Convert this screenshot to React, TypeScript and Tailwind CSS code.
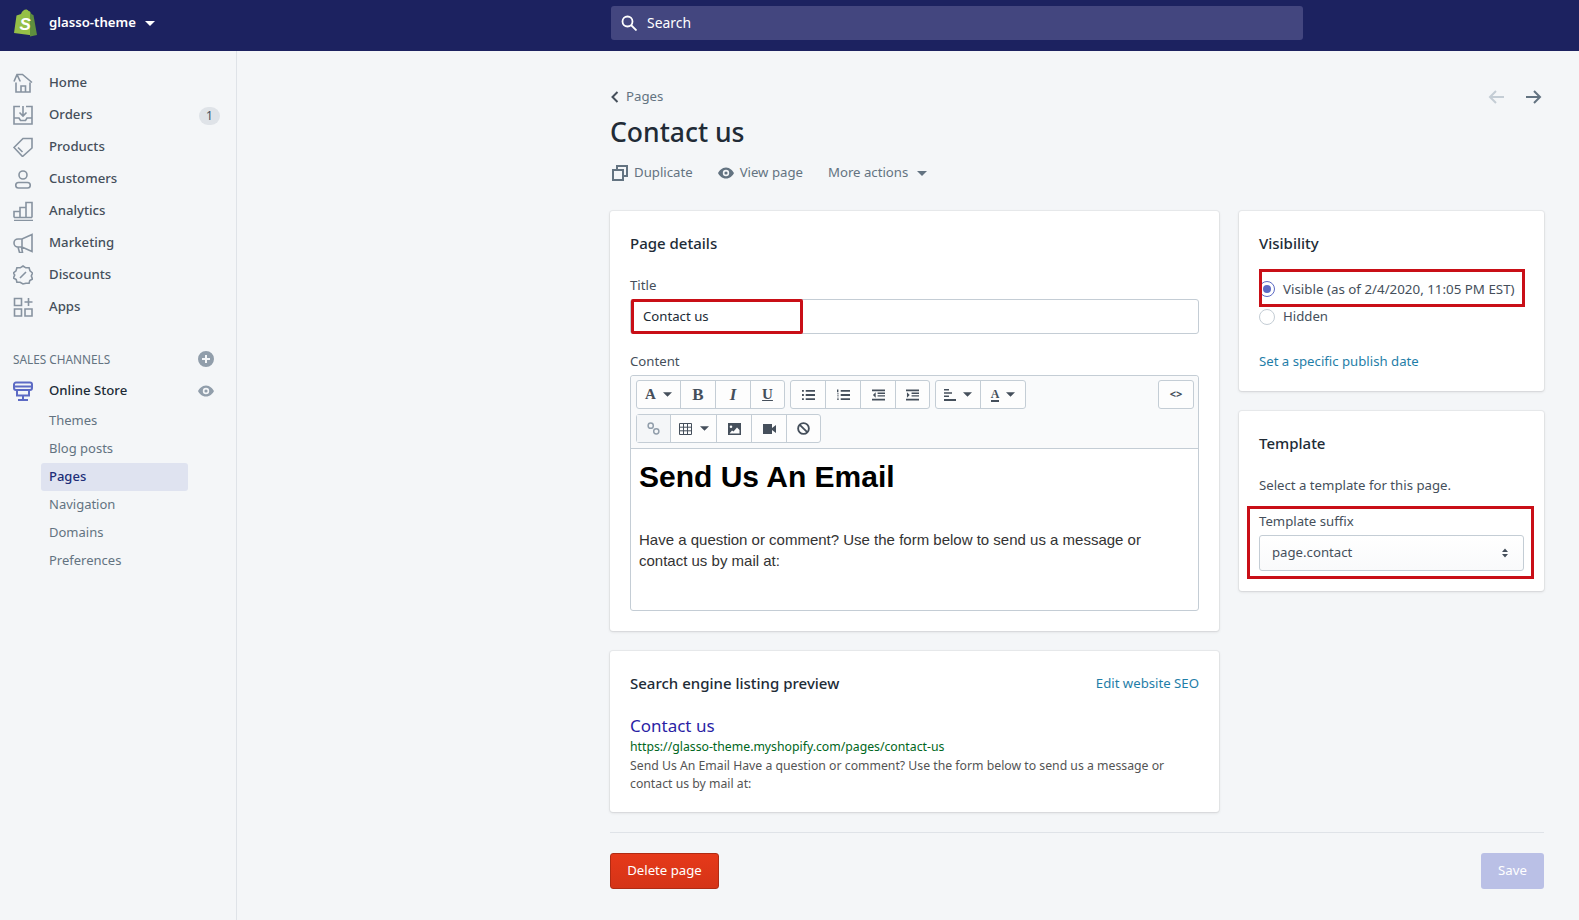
import React from 'react'

const navIcons: Record<string, React.ReactNode> = {
  Home: <path d="M3 9.500V19h14V9.500M1 8.500 4 1.500h5.500L19 9.500M4 1.500 7 8v.5M8 19v-6h4.500v6" />,
  Orders: <path d="M7 1.500H1V19h18V1.500h-6M1 13h5l1.500 2.500h5L14 13h5M10 1v9.500M6.500 7.500l3.500 3.500 3.500-3.500" />,
  Products: <path d="M1 10.500 10 1.500h9v9.500L9.500 19.500zM5 10.500l4.500 4.500M15.500 5v.1" />,
  Customers: <path d="M10 10a4 4 0 1 0 0-8 4 4 0 0 0 0 8zM5.500 19a2.500 2.500 0 0 1 0-5.500h9a2.500 2.500 0 0 1 0 5.500z" />,
  Analytics: <path d="M1 19.500h19M1 16.500V10.500h6v6M7 16.500V6.500h6v10M13 16.500V1.500h6v15M1 16.500h18" />,
  Marketing: <path d="M19 1.500 9 6H5a4 4 0 0 0 0 8h4l10 4.500zM9 6v8M5 14l1.500 5.500h3L8.500 14" />,
  Discounts: <path d="M10 1l2.800 1.800 3.300-.1.900 3.200 2.500 2.100-1.200 3 1.200 3-2.700 1.500-.7 2.800-3.200-.1L10 19l-2.900-1.800-3.200.1-.7-2.800L.5 13l1.200-3L.5 7.900 3 5.900l.9-3.200 3.300.1zM7 13l6-6M7.500 7.500v.1M12.500 12.500v.1" />,
  Apps: <path d="M1.500 1.500h7v7h-7zM1.500 12h7v7h-7zM12 12h7v7h-7zM15.500 1v8M11.500 5h8" />,
}

const navItems = ['Home', 'Orders', 'Products', 'Customers', 'Analytics', 'Marketing', 'Discounts', 'Apps']
const subItems = ['Themes', 'Blog posts', 'Pages', 'Navigation', 'Domains', 'Preferences']

function Caret({ className }: { className: string }) {
  return (
    <svg viewBox="0 0 10 5" className={className} fill="currentColor">
      <path d="M0 0h10L5 5z" />
    </svg>
  )
}

function Eye({ className }: { className: string }) {
  return (
    <svg viewBox="0 0 20 20" className={className} fill="currentColor">
      <path fillRule="evenodd" d="M10 3C5 3 1.500 7 0 10c1.500 3 5 7 10 7s8.500-4 10-7c-1.500-3-5-7-10-7zm0 11a4 4 0 1 1 0-8 4 4 0 0 1 0 8zm0-2a2 2 0 1 0 0-4 2 2 0 0 0 0 4z" />
    </svg>
  )
}

function Sidebar() {
  return (
    <aside className="w-[237px] shrink-0 border-r border-[#dfe3e8] pt-4 text-[13.2px] text-[#454f5b]">
      {navItems.map((item) => (
        <div key={item} className="flex h-8 items-center pl-[13px]">
          <svg viewBox="0 0 20 20" className="h-5 w-5 shrink-0 text-[#8793a0]" fill="none" stroke="currentColor" strokeWidth="1.600">
            {navIcons[item]}
          </svg>
          <span className="ml-4 font-medium">{item}</span>
          {item === 'Orders' && (
            <span className="ml-auto mr-4 mt-[2px] flex h-[18px] w-[21px] items-center justify-center rounded-full bg-[#dfe3e8] text-[12px]">1</span>
          )}
        </div>
      ))}
      <div className="mt-[21px] flex h-[31px] items-center justify-between pl-[13px] pr-[22px] text-[11.800px] text-[#637381]">
        <span>SALES CHANNELS</span>
        <svg viewBox="0 0 16 16" className="mb-[2px] h-4 w-4 text-[#919eab]" fill="currentColor">
          <path fillRule="evenodd" d="M8 0a8 8 0 1 0 0 16A8 8 0 0 0 8 0zm1 7h3v2H9v3H7V9H4V7h3V4h2z" />
        </svg>
      </div>
      <div className="flex h-8 items-center pl-[13px] pr-[22px]">
        <svg viewBox="0 0 20 20" className="h-5 w-5 shrink-0 text-[#5c6ac4]" fill="none" stroke="currentColor" strokeWidth="2">
          <path d="M3 1.500h14a2 2 0 0 1 2 2V7a2 2 0 0 1-2 2H3a2 2 0 0 1-2-2V3.500a2 2 0 0 1 2-2zM1 5.500h18M4 9v5.500h12V9M10 14.500v4M5 19h10" />
        </svg>
        <span className="ml-4 font-medium text-[#212b36]">Online Store</span>
        <Eye className="ml-auto h-4 w-4 text-[#919eab]" />
      </div>
      <div className="pl-[41px] text-[13px]">
        {subItems.map((item) =>
          item === 'Pages' ? (
            <div key={item} className="flex h-7 w-[147px] items-center rounded-[3px] bg-[#dfe3f0] pl-2 font-medium text-[#202e78]">
              {item}
            </div>
          ) : (
            <div key={item} className="flex h-7 items-center pl-2 text-[#637381]">
              {item}
            </div>
          )
        )}
      </div>
    </aside>
  )
}

function ToolButton({ width, disabled, children }: { width: string; disabled?: boolean; children: React.ReactNode }) {
  return (
    <div className={`flex h-full items-center justify-center border-r border-[#c4cdd5] text-[#454f5b] last:border-r-0 ${width} ${disabled ? 'bg-[#f4f6f8] text-[#919eab]' : ''}`}>
      {children}
    </div>
  )
}

function Group({ children, className = '' }: { children: React.ReactNode; className?: string }) {
  return <div className={`flex h-full rounded-[3px] border border-[#c4cdd5] bg-white/60 ${className}`}>{children}</div>
}

function ListIcon({ numbered }: { numbered?: boolean }) {
  return (
    <svg viewBox="0 0 14 12" className="h-3 w-[13px]" fill="currentColor">
      {numbered ? <path d="M0 0h1.500v3H0zM0 4.500h2v.8H0zM0 6.500h2v.8H0zM0 9h2v.8H0zM0 10.700h2v.8H0z" /> : <path d="M0 .5h2v2H0zM0 5h2v2H0zM0 9.500h2v2H0z" />}
      <path d="M4 .5h10v2H4zM4 5h10v2H4zM4 9.500h10v2H4z" />
    </svg>
  )
}

function IndentIcon({ flip }: { flip?: boolean }) {
  return (
    <svg viewBox="0 0 14 12" className="h-3 w-[13px]" fill="currentColor">
      <path d="M0 0h14v2H0zM6 3.300h8v1.500H6zM6 6.200h8v1.500H6zM0 10h14v2H0z" />
      <path d={flip ? 'M1 3l3 3-3 3z' : 'M4 3 1 6l3 3z'} />
    </svg>
  )
}

function EditorToolbar() {
  const serif = 'font-["Liberation_Serif",serif] font-bold'
  return (
    <div className="flex h-[73px] flex-col gap-[5px] rounded-t-[3px] border-b border-[#c4cdd5] bg-[#f9fafb] pl-[5px] pr-[5px] pt-1">
      <div className="flex h-[29px] gap-[5px]">
        <Group>
          <ToolButton width="w-[44px] gap-[7px]">
            <span className={`${serif} text-[15px]`}>A</span>
            <Caret className="h-[5px] w-[9px]" />
          </ToolButton>
          <ToolButton width="w-[35px]"><span className={`${serif} text-[17px]`}>B</span></ToolButton>
          <ToolButton width="w-[35px]"><span className={`${serif} text-[17px] italic`}>I</span></ToolButton>
          <ToolButton width="w-[33px]"><span className={`${serif} text-[15px] underline`}>U</span></ToolButton>
        </Group>
        <Group>
          <ToolButton width="w-[35px]"><ListIcon /></ToolButton>
          <ToolButton width="w-[35px]"><ListIcon numbered /></ToolButton>
          <ToolButton width="w-[35px]"><IndentIcon /></ToolButton>
          <ToolButton width="w-[33px]"><IndentIcon flip /></ToolButton>
        </Group>
        <Group>
          <ToolButton width="w-[45px] gap-[7px]">
            <svg viewBox="0 0 12 12" className="h-3 w-3" fill="currentColor"><path d="M0 0h5v1.500H0zM0 3.300h8v1.500H0zM0 6.600h5v1.500H0zM0 10h12v2H0z" /></svg>
            <Caret className="h-[5px] w-[9px]" />
          </ToolButton>
          <ToolButton width="w-[44px] gap-[7px]">
            <span className={`${serif} border-b-2 border-[#454f5b] text-[12px] leading-[12px]`}>A</span>
            <Caret className="h-[5px] w-[9px]" />
          </ToolButton>
        </Group>
        <Group className="ml-auto mr-[-1px] w-[36px] items-center justify-center text-[11px] font-bold text-[#454f5b]">
          {'<>'}
        </Group>
      </div>
      <div className="flex h-[29px]">
        <Group>
          <ToolButton width="w-[34px]" disabled>
            <svg viewBox="0 0 14 14" className="h-[13px] w-[13px]" fill="none" stroke="currentColor" strokeWidth="1.600">
              <circle cx="4" cy="4" r="2.800" />
              <circle cx="10" cy="10" r="2.800" />
            </svg>
          </ToolButton>
          <ToolButton width="w-[46px] gap-[8px]">
            <svg viewBox="0 0 13 12" className="h-3 w-[13px]" fill="none" stroke="currentColor">
              <path d="M.5.5h12v11H.5zM.5 4.200h12M.5 7.800h12M4.500.5v11M8.500.5v11" />
            </svg>
            <Caret className="h-[5px] w-[9px]" />
          </ToolButton>
          <ToolButton width="w-[35px]">
            <svg viewBox="0 0 13 12" className="h-3 w-[13px]" fill="currentColor">
              <path fillRule="evenodd" d="M0 0h13v12H0zm3 2.500a1.300 1.300 0 1 0 0 2.600 1.300 1.300 0 0 0 0-2.600zM1.500 10.500h10V7L9 4.500 5.500 8.500 4 7.500z" />
            </svg>
          </ToolButton>
          <ToolButton width="w-[35px]">
            <svg viewBox="0 0 13 10" className="h-[10px] w-[13px]" fill="currentColor"><path d="M0 0h9v10H0zM9 4l4-3v8L9 6z" /></svg>
          </ToolButton>
          <ToolButton width="w-[33px]">
            <svg viewBox="0 0 14 14" className="h-[13px] w-[13px]" fill="none" stroke="currentColor" strokeWidth="2">
              <circle cx="7" cy="7" r="5.800" />
              <path d="M3 3l8 8" />
            </svg>
          </ToolButton>
        </Group>
      </div>
    </div>
  )
}

function Card({ children, className = '' }: { children: React.ReactNode; className?: string }) {
  return (
    <section className={`rounded-[3px] bg-white px-5 pt-5 pb-5 shadow-[0_0_0_1px_rgba(63,63,68,0.05),0_1px_3px_0_rgba(63,63,68,0.15)] ${className}`}>
      {children}
    </section>
  )
}

function CardTitle({ children }: { children: React.ReactNode }) {
  return <h2 className="pt-px text-[15px] font-medium leading-[23px] text-[#212b36]">{children}</h2>
}

function Radio({ checked }: { checked?: boolean }) {
  return (
    <span className={`flex h-4 w-4 shrink-0 items-center justify-center rounded-full border bg-white ${checked ? 'border-[#5c6ac4]' : 'border-[#c4cdd5]'}`}>
      {checked && <span className="h-2 w-2 rounded-full bg-[#5c6ac4]" />}
    </span>
  )
}

const redBox = 'pointer-events-none absolute border-[3px] border-[#c90f17]'

export default function App() {
  return (
    <div className='flex h-screen flex-col overflow-hidden bg-[#f4f6f8] font-["Noto_Sans",sans-serif]'>
      <header className="flex h-[51px] shrink-0 items-center bg-[#1c2260] pb-[5px] text-white">
        <div className="flex w-[611px] items-center pl-[13px]">
          <svg viewBox="0 0 24 28" className="h-7 w-6 shrink-0">
            <path d="M1 24 3.500 6.500 8 5c1-3 3-4.500 5-4.500 1 0 2 .5 2.500 1.500l1.500.5L20 26.500z" fill="#95bf47" />
            <path d="M17 2.500 18.500 5l2 1.200L24 26l-7 1.500z" fill="#5e8e3e" />
            <text x="6.500" y="21" fill="#fff" fontSize="17" fontWeight="800" fontStyle="italic" fontFamily="Liberation Sans, sans-serif">S</text>
          </svg>
          <span className="ml-3 text-[13.200px] font-semibold">glasso-theme</span>
          <Caret className="ml-[9px] h-[5px] w-[10px]" />
        </div>
        <div className="flex h-[34px] w-[692px] items-center rounded-[3px] bg-[#43467f] pl-[10px] text-[13.900px]">
          <svg viewBox="0 0 16 16" className="h-4 w-4" fill="none" stroke="currentColor" strokeWidth="1.800">
            <circle cx="6.500" cy="6.500" r="5" />
            <path d="m10 10 5.500 5.500" />
          </svg>
          <span className="ml-[10px]">Search</span>
        </div>
      </header>
      <div className="flex min-h-0 flex-1">
        <Sidebar />
        <main className="flex-1 pl-[373px] pt-9">
          <div className="w-[934px] text-[13.200px] text-[#212b36]">
            <div className="flex h-5 items-center justify-between">
              <div className="flex items-center pl-px text-[#637381]">
                <svg viewBox="0 0 8 12" className="h-3 w-2" fill="none" stroke="#454f5b" strokeWidth="2"><path d="M6.500 1 1.500 6l5 5" /></svg>
                <span className="ml-[7px]">Pages</span>
              </div>
              <div className="flex gap-[22px] pr-[2px]">
                <svg viewBox="0 0 16 14" className="h-[14px] w-4" fill="none" stroke="#c4cdd5" strokeWidth="2"><path d="M16 7H2M8 1 2 7l6 6" /></svg>
                <svg viewBox="0 0 16 14" className="h-[14px] w-4" fill="none" stroke="#637381" strokeWidth="2"><path d="M0 7h14M8 1l6 6-6 6" /></svg>
              </div>
            </div>
            <h1 className="mt-2 pb-[2px] text-[26.500px] font-medium leading-[34px]">Contact us</h1>
            <div className="mt-3 flex h-5 items-center text-[#637381]">
              <svg viewBox="0 0 16 16" className="ml-[2px] h-4 w-4" fill="none" stroke="#637381" strokeWidth="2"><path d="M5 5V1h10v10h-4M1 5h10v10H1z" /></svg>
              <span className="ml-[6px]">Duplicate</span>
              <Eye className="ml-[25px] h-4 w-4 text-[#637381]" />
              <span className="ml-[6px]">View page</span>
              <span className="ml-[25px]">More actions</span>
              <Caret className="ml-[9px] h-[5px] w-[10px]" />
            </div>
            <div className="mt-7 flex gap-5">
              <div className="w-[609px]">
                <Card>
                  <CardTitle>Page details</CardTitle>
                  <div className="mt-5 h-5 leading-5 text-[#454f5b]">Title</div>
                  <div className="relative mt-1 flex h-[35px] items-center rounded-[3px] border border-[#c4cdd5] bg-white pl-3">
                    Contact us
                    <div className={`${redBox} left-0 -top-px h-[35px] w-[172px] rounded-[2px]`} />
                  </div>
                  <div className="mt-[17px] h-5 leading-5 text-[#454f5b]">Content</div>
                  <div className="mt-1 h-[236px] overflow-hidden rounded-[3px] border border-[#c4cdd5]">
                    <EditorToolbar />
                    <div className='px-2 font-["Liberation_Sans",sans-serif] text-black'>
                      <h3 className="pt-[8px] text-[30px] font-bold leading-[40px]">Send Us An Email</h3>
                      <p className="mt-[32px] text-[15px] leading-[21px] text-[#333]">
                        Have a question or comment? Use the form below to send us a message or contact us by mail at:
                      </p>
                    </div>
                  </div>
                </Card>
                <Card className="mt-5 !pb-[19px]">
                  <div className="flex items-center justify-between">
                    <CardTitle>Search engine listing preview</CardTitle>
                    <span className="pt-[2px] text-[#1f7ea8]">Edit website SEO</span>
                  </div>
                  <div className="mt-[19px] text-[17px] leading-6 text-[#2a1fa5]">Contact us</div>
                  <div className="text-[12.250px] leading-[18px] text-[#006621]">https://glasso-theme.myshopify.com/pages/contact-us</div>
                  <p className="mt-px text-[12.250px] leading-[18px] text-[#545454]">
                    Send Us An Email Have a question or comment? Use the form below to send us a message or contact us by mail at:
                  </p>
                </Card>
              </div>
              <div className="w-[305px]">
                <Card>
                  <CardTitle>Visibility</CardTitle>
                  <div className="relative mt-6 flex h-5 items-center gap-2 whitespace-nowrap text-[13.350px] text-[#454f5b]">
                    <Radio checked />
                    Visible (as of 2/4/2020, 11:05 PM EST)
                    <div className={`${redBox} left-0 -top-[10px] h-[38px] w-[266px]`} />
                  </div>
                  <div className="mt-2 flex h-5 items-center gap-2 text-[#454f5b]">
                    <Radio />
                    Hidden
                  </div>
                  <div className="mt-6 h-5 leading-5 text-[#1f7ea8]">Set a specific publish date</div>
                </Card>
                <Card className="mt-5">
                  <CardTitle>Template</CardTitle>
                  <p className="mt-5 h-5 leading-5 text-[#454f5b]">Select a template for this page.</p>
                  <div className="relative mt-4">
                    <div className="h-5 leading-5 text-[#454f5b]">Template suffix</div>
                    <div className="mt-1 flex h-9 items-center justify-between rounded-[3px] border border-[#c4cdd5] bg-gradient-to-b from-white to-[#f9fafb] pl-3 pr-[14px] text-[#454f5b]">
                      page.contact
                      <svg viewBox="0 0 8 12" className="h-3 w-2 text-[#454f5b]" fill="currentColor"><path d="M4 1.500 7 5H1zM4 10.500 1 7h6z" /></svg>
                    </div>
                    <div className={`${redBox} -left-[12px] -top-[5px] h-[73px] w-[287px]`} />
                  </div>
                </Card>
              </div>
            </div>
            <div className="mt-5 border-t border-[#dfe3e8]" />
            <div className="mt-5 flex justify-between">
              <button className="h-9 w-[109px] rounded-[3px] border border-[#b02b13] bg-gradient-to-b from-[#e6391a] to-[#d53417] text-white">Delete page</button>
              <button className="h-9 w-[63px] rounded-[3px] bg-[#bac0e6] text-white">Save</button>
            </div>
          </div>
        </main>
      </div>
    </div>
  )
}
